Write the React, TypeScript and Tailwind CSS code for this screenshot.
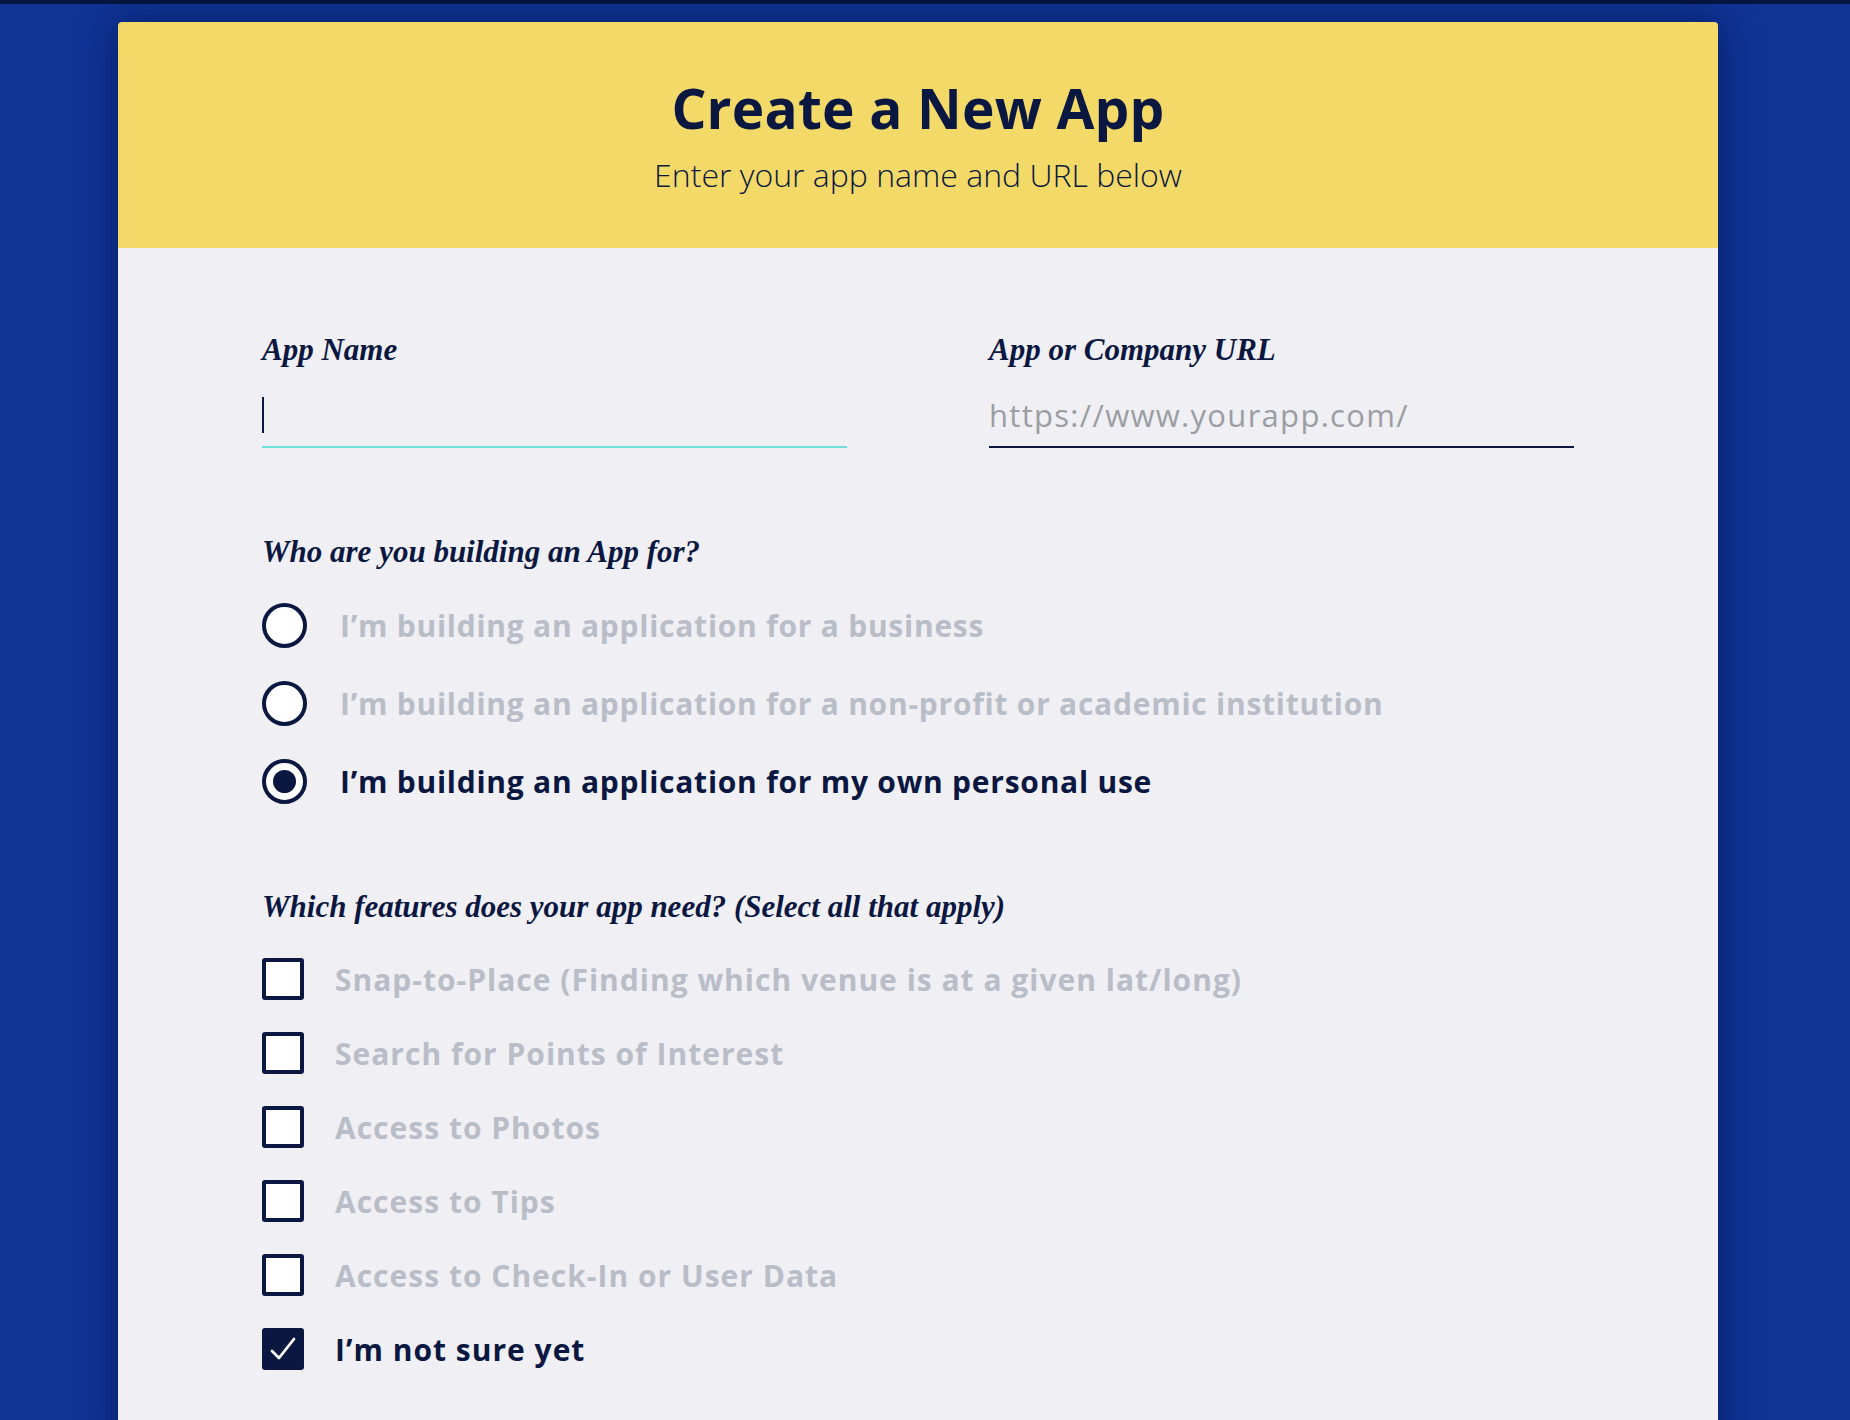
import React from "react";

const NAVY = "text-[#0a1740]";

const AUDIENCES = [
  { label: "I’m building an application for a business", on: false },
  { label: "I’m building an application for a non-profit or academic institution", on: false },
  { label: "I’m building an application for my own personal use", on: true },
];

const FEATURES = [
  { label: "Snap-to-Place (Finding which venue is at a given lat/long)", on: false },
  { label: "Search for Points of Interest", on: false },
  { label: "Access to Photos", on: false },
  { label: "Access to Tips", on: false },
  { label: "Access to Check-In or User Data", on: false },
  { label: "I’m not sure yet", on: true },
];

const serif = "font-['Liberation_Serif',serif] italic font-bold text-[31px] leading-[36px] text-[#0a1740]";

function Radio({ on }: { on: boolean }) {
  return (
    <span className="w-[45px] h-[45px] shrink-0 rounded-full border-4 border-[#0a1740] bg-white flex items-center justify-center">
      {on && <span className="w-[23px] h-[23px] rounded-full bg-[#0a1740]" />}
    </span>
  );
}

function Check({ on }: { on: boolean }) {
  return (
    <span
      className={
        "w-[42px] h-[42px] shrink-0 rounded-[3px] border-4 border-[#0a1740] flex items-center justify-center " +
        (on ? "bg-[#0a1740]" : "bg-white")
      }
    >
      {on && (
        <svg width="28" height="26" viewBox="0 0 28 26" fill="none">
          <path d="M3 15 L10 22 L25 3" stroke="white" strokeWidth="2.8" strokeLinecap="round" strokeLinejoin="round" />
        </svg>
      )}
    </span>
  );
}

export default function App() {
  return (
    <div className="min-h-screen bg-[#0f3496] border-t-4 border-[#061640] font-['Open_Sans',sans-serif]">
      <div className="w-[1600px] ml-[118px] mt-[18px] rounded-t-[4px] overflow-hidden shadow-[0_0_36px_rgba(3,12,50,0.55)]">
        {/* Header */}
        <div className="h-[226px] bg-[#f3d967] flex flex-col items-center pt-[50px]">
          <h1 className={`text-[55px] leading-[72px] font-bold tracking-[0.2px] ${NAVY}`}>Create a New App</h1>
          <p className={`mt-[11px] text-[32px] leading-[40px] font-light ${NAVY}`}>Enter your app name and URL below</p>
        </div>

        {/* Form */}
        <div className="bg-[#efeff4] px-[144px] pt-[84px] pb-[80px]">
          <div className="grid grid-cols-2 gap-[142px]">
            <div>
              <p className={serif}>App Name</p>
              <div className="relative mt-[22px] h-[58px] border-b-2 border-[#6fdfd9]">
                <span className="absolute left-0 top-[7px] w-[2px] h-[36px] bg-[#0a1740]" />
              </div>
            </div>
            <div>
              <p className={serif}>App or Company URL</p>
              <div className="mt-[22px] h-[58px] border-b-2 border-[#0a1740] pb-[6px] flex items-center">
                <span className="text-[31px] text-[#9b9ea3] font-medium tracking-[1.3px]">https://www.yourapp.com/</span>
              </div>
            </div>
          </div>

          <p className={`mt-[86px] ${serif}`}>Who are you building an App for?</p>
          <div className="mt-[32px] flex flex-col gap-[32px]">
            {AUDIENCES.map((a) => (
              <div key={a.label} className="h-[46px] flex items-center gap-[33px]">
                <Radio on={a.on} />
                <span className={`text-[30px] font-bold tracking-[0.75px] ${a.on ? "text-[#0a1740]" : "text-[#b9bdc8]"}`}>
                  {a.label}
                </span>
              </div>
            ))}
          </div>

          <p className={`mt-[85px] ${serif}`}>Which features does your app need? (Select all that apply)</p>
          <div className="mt-[33px] flex flex-col gap-[32px]">
            {FEATURES.map((f) => (
              <div key={f.label} className="h-[42px] flex items-center gap-[31px]">
                <Check on={f.on} />
                <span className={`text-[30px] font-bold tracking-[1px] ${f.on ? "text-[#0a1740]" : "text-[#b9bdc8]"}`}>
                  {f.label}
                </span>
              </div>
            ))}
          </div>
        </div>
      </div>
    </div>
  );
}
